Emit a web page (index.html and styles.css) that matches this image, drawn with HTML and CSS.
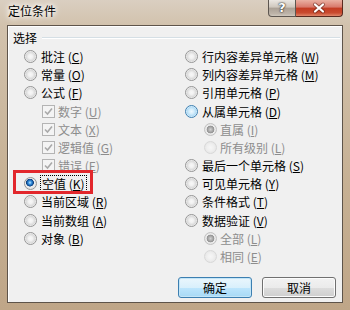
FILE: index.html
```html
<!DOCTYPE html>
<html lang="zh-CN">
<head>
    <meta charset="UTF-8">
    <title>定位条件</title>
    <link rel="stylesheet" href="styles.css">
</head>
<body>
    <div class="window">
        <div class="titlebar">
            <span class="title">定位条件</span>
            <div class="caption">
                <span class="cap-help">?</span>
                <span class="cap-close">
                    <svg width="46" height="16" viewBox="0 0 46 16">
                        <path d="M19 4.5 L27 11.5 M27 4.5 L19 11.5" stroke="#5b2218" stroke-width="4" stroke-linecap="round" opacity="0.55"/>
                        <path d="M19 4.5 L27 11.5 M27 4.5 L19 11.5" stroke="#fff" stroke-width="2.2" stroke-linecap="round"/>
                    </svg>
                </span>
            </div>
        </div>

        <div class="client">
            <div class="group-label">
                <span>选择</span>
                <span class="rule"></span>
            </div>

            <div class="options">
                <!-- 左列 -->
                <div class="col">
                    <div class="row"><span class="radio"></span><span>批注 (<u>C</u>)</span></div>
                    <div class="row"><span class="radio"></span><span>常量 (<u>O</u>)</span></div>
                    <div class="row"><span class="radio"></span><span>公式 (<u>F</u>)</span></div>
                    <div class="row sub-check disabled"><span class="check"><svg width="11" height="11" viewBox="0 0 11 11"><path d="M2 5.5 L4.5 8 L9 2.5" fill="none" stroke="#a9a9a9" stroke-width="1.6"/></svg></span><span>数字 (<u>U</u>)</span></div>
                    <div class="row sub-check disabled"><span class="check"><svg width="11" height="11" viewBox="0 0 11 11"><path d="M2 5.5 L4.5 8 L9 2.5" fill="none" stroke="#a9a9a9" stroke-width="1.6"/></svg></span><span>文本 (<u>X</u>)</span></div>
                    <div class="row sub-check disabled"><span class="check"><svg width="11" height="11" viewBox="0 0 11 11"><path d="M2 5.5 L4.5 8 L9 2.5" fill="none" stroke="#a9a9a9" stroke-width="1.6"/></svg></span><span>逻辑值 (<u>G</u>)</span></div>
                    <div class="row sub-check disabled"><span class="check"><svg width="11" height="11" viewBox="0 0 11 11"><path d="M2 5.5 L4.5 8 L9 2.5" fill="none" stroke="#a9a9a9" stroke-width="1.6"/></svg></span><span>错误 (<u>E</u>)</span></div>
                    <div class="row marked"><span class="radio checked"></span><span class="focus">空值 (<u>K</u>)</span><span class="mark"></span></div>
                    <div class="row"><span class="radio"></span><span>当前区域 (<u>R</u>)</span></div>
                    <div class="row"><span class="radio"></span><span>当前数组 (<u>A</u>)</span></div>
                    <div class="row"><span class="radio"></span><span>对象 (<u>B</u>)</span></div>
                </div>
                <!-- 右列 -->
                <div class="col">
                    <div class="row"><span class="radio"></span><span>行内容差异单元格 (<u>W</u>)</span></div>
                    <div class="row"><span class="radio"></span><span>列内容差异单元格 (<u>M</u>)</span></div>
                    <div class="row"><span class="radio"></span><span>引用单元格 (<u>P</u>)</span></div>
                    <div class="row"><span class="radio hot"></span><span>从属单元格 (<u>D</u>)</span></div>
                    <div class="row sub-radio disabled"><span class="radio checked"></span><span>直属 (<u>I</u>)</span></div>
                    <div class="row sub-radio disabled"><span class="radio"></span><span>所有级别 (<u>L</u>)</span></div>
                    <div class="row"><span class="radio"></span><span>最后一个单元格 (<u>S</u>)</span></div>
                    <div class="row"><span class="radio"></span><span>可见单元格 (<u>Y</u>)</span></div>
                    <div class="row"><span class="radio"></span><span>条件格式 (<u>T</u>)</span></div>
                    <div class="row"><span class="radio"></span><span>数据验证 (<u>V</u>)</span></div>
                    <div class="row sub-radio disabled"><span class="radio checked"></span><span>全部 (<u>L</u>)</span></div>
                    <div class="row sub-radio disabled"><span class="radio"></span><span>相同 (<u>E</u>)</span></div>
                </div>
            </div>

            <div class="buttons">
                <button class="btn default">确定</button>
                <button class="btn">取消</button>
            </div>
        </div>
    </div>
</body>
</html>
```

FILE: styles.css
```css
/* 基本 */
* {
    box-sizing: border-box;
}

body {
    margin: 0;
    font-family: "Noto Sans CJK SC", "Noto Sans", sans-serif;
    font-size: 12px;
    color: #000;
}

/* 窗口框架 */
.window {
    width: 350px;
    height: 310px;
    padding: 0 7px 7px 7px;
    display: flex;
    flex-direction: column;
    background: linear-gradient(to bottom, #dacfc1 0, #d2c2ad 25px, #c6b093 60%, #bfa688 100%);
}

.titlebar {
    height: 25px;
    display: flex;
    justify-content: space-between;
    align-items: flex-start;
}

.title {
    margin: 4px 0 0 1px;
    line-height: 14px;
    text-shadow: 0 0 4px #fff, 0 0 6px #fff, 0 0 8px #fff;
}

.caption {
    display: flex;
}

.cap-help {
    width: 28px;
    height: 17px;
    border: 1px solid #5d5650;
    border-top: none;
    border-radius: 0 0 0 4px;
    background: linear-gradient(to bottom, #ebe7e2, #cfc7bd 45%, #aaa095 50%, #bdb3a8 85%, #cfc7bd);
    color: #fff;
    font: bold 13px "DejaVu Sans", sans-serif;
    line-height: 16px;
    text-align: center;
    text-shadow: 0 0 2px #222, 0 0 1px #000;
}

.cap-close {
    width: 47px;
    height: 17px;
    border: 1px solid #5a2a20;
    border-top: none;
    border-left: none;
    border-radius: 0 0 4px 0;
    background: linear-gradient(to bottom, #eab0a2, #d8786a 45%, #c33b22 50%, #c94a2f 80%, #e1866a);
}

.cap-close svg {
    display: block;
}

/* 客户区 */
.client {
    flex: 1;
    display: flex;
    flex-direction: column;
    background: #f0f0f0;
    border: 1px solid #5e544a;
    box-shadow: inset 1px 1px 0 #fff;
    padding: 5px 0 0 5px;
}

.group-label {
    display: flex;
    align-items: center;
    gap: 5px;
    line-height: 14px;
    margin-right: 2px;
}

.group-label .rule {
    flex: 1;
    height: 2px;
    border-top: 1px solid #d5dfe5;
    border-bottom: 1px solid #fff;
}

.options {
    display: grid;
    grid-template-columns: 161px 1fr;
    margin-top: 2.4px;
    padding-left: 11px;
}

.row {
    height: 18.2px;
    display: flex;
    align-items: center;
    gap: 4px;
    white-space: nowrap;
}

.row u {
    text-decoration-thickness: 1px;
    text-underline-offset: 1px;
}

.sub-check {
    padding-left: 18px;
    gap: 3px;
}

.sub-radio {
    padding-left: 19px;
    gap: 3px;
}

.disabled {
    color: #8d8d8d;
}

/* 单选按钮 */
.radio {
    width: 13px;
    height: 13px;
    flex: none;
    border-radius: 50%;
    border: 1px solid #959595;
    background: radial-gradient(circle, #f7f7f7 0, #f2f2f2 2px, #d9d9d9 4.5px, #f4f4f4 5.5px);
}

.radio.checked {
    background: radial-gradient(circle at 45% 42%, #c4e6ff 0, #3c95e0 1.6px, #145aa6 3px, #0b3c78 3.6px, #f4f4f4 4.2px, #e4e4e4 5.5px);
}

.radio.hot {
    border-color: #3c7fb1;
    background: radial-gradient(circle, #eef8fe 0, #d4edfb 2.5px, #b2dcf6 4.5px, #e6f5fd 5.5px);
}

.disabled .radio {
    border-color: #d8d8d8;
    background: radial-gradient(circle, #f6f6f6 0, #f0f0f0 3px, #e8e8e8 5.5px);
}

.disabled .radio.checked {
    border-color: #c2c2c2;
    background: radial-gradient(circle, #d2d2d2 0, #9c9c9c 3px, #8c8c8c 3.5px, #eeeeee 4.2px, #e4e4e4 5.5px);
}

/* 复选框 */
.check {
    width: 13px;
    height: 13px;
    flex: none;
    border: 1px solid #b4b4b4;
    background: #f4f4f4;
    display: flex;
    align-items: center;
    justify-content: center;
}

.check svg {
    display: block;
}

/* 标注框 */
.marked {
    position: relative;
}

.focus {
    outline: 1px dotted #000;
    outline-offset: 0;
    padding: 0 1px;
    line-height: 15px;
}

.mark {
    position: absolute;
    left: -11px;
    top: -5px;
    width: 80px;
    height: 24px;
    border: 3px solid #e2272c;
}

/* 按钮 */
.buttons {
    margin-top: auto;
    display: flex;
    justify-content: flex-end;
    gap: 10px;
    padding: 0 6px 4px 0;
}

.btn {
    width: 74px;
    height: 21px;
    padding: 0;
    font: inherit;
    color: #000;
    border: 1px solid #707070;
    border-radius: 3px;
    background: linear-gradient(to bottom, #f2f2f2, #ebebeb 50%, #dddddd 50%, #cfcfcf);
    box-shadow: inset 0 0 0 1px #fcfcfc;
}

.btn.default {
    border-color: #3c7fb1;
    background: linear-gradient(to bottom, #eaf6fd, #d9f0fc 50%, #bee6fd 50%, #a7d9f5);
    box-shadow: inset 0 0 0 1px #c3e5f7;
}
```
